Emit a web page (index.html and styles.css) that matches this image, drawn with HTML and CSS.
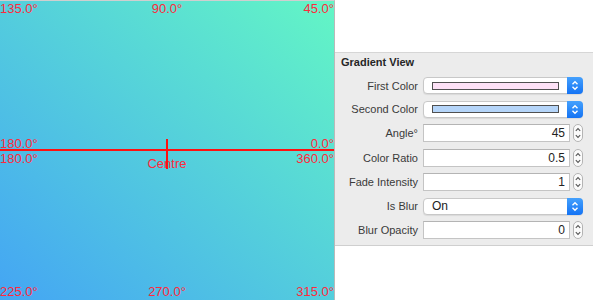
FILE: index.html
```html
<!DOCTYPE html>
<html lang="en">
<head>
    <meta charset="UTF-8">
    <meta name="viewport" content="width=device-width, initial-scale=1.0">
    <title>Gradient View</title>
    <link rel="stylesheet" href="styles.css">
</head>
<body>
    <div class="screen">
        <div class="canvas">
            <div class="label-row">
                <span class="lbl-left">135.0°</span>
                <span>90.0°</span>
                <span class="lbl-right">45.0°</span>
            </div>

            <div class="axis">
                <div class="label-row">
                    <span class="lbl-left">180.0°</span>
                    <span></span>
                    <span class="lbl-right">0.0°</span>
                </div>
                <div class="axis-line"></div>
                <div class="label-row">
                    <span class="lbl-left">180.0°</span>
                    <span class="centre">Centre</span>
                    <span class="lbl-right">360.0°</span>
                </div>
                <div class="tick"></div>
            </div>

            <div class="label-row bottom-row">
                <span class="lbl-left">225.0°</span>
                <span>270.0°</span>
                <span class="lbl-right">315.0°</span>
            </div>
        </div>

        <div class="side">
            <div class="panel">
                <div class="panel-title">Gradient View</div>

                <div class="rows">
                    <div class="field-row">
                        <label>First Color</label>
                        <div class="popup">
                            <span class="swatch pink"></span>
                            <span class="popup-btn">
                                <svg width="16" height="17" viewBox="0 0 16 17"><path d="M5.5 7.2 L8 4.7 L10.5 7.2 M5.5 9.8 L8 12.3 L10.5 9.8" fill="none" stroke="#fff" stroke-width="1.4"/></svg>
                            </span>
                        </div>
                    </div>

                    <div class="field-row">
                        <label>Second Color</label>
                        <div class="popup">
                            <span class="swatch blue"></span>
                            <span class="popup-btn">
                                <svg width="16" height="17" viewBox="0 0 16 17"><path d="M5.5 7.2 L8 4.7 L10.5 7.2 M5.5 9.8 L8 12.3 L10.5 9.8" fill="none" stroke="#fff" stroke-width="1.4"/></svg>
                            </span>
                        </div>
                    </div>

                    <div class="field-row">
                        <label>Angle°</label>
                        <div class="input-wrap">
                            <div class="input">45</div>
                            <span class="stepper">
                                <svg width="10" height="18" viewBox="0 0 10 18"><path d="M2.8 6.8 L5 4.6 L7.2 6.8 M2.8 11.2 L5 13.4 L7.2 11.2" fill="none" stroke="#555" stroke-width="1.1"/></svg>
                            </span>
                        </div>
                    </div>

                    <div class="field-row">
                        <label>Color Ratio</label>
                        <div class="input-wrap">
                            <div class="input">0.5</div>
                            <span class="stepper">
                                <svg width="10" height="18" viewBox="0 0 10 18"><path d="M2.8 6.8 L5 4.6 L7.2 6.8 M2.8 11.2 L5 13.4 L7.2 11.2" fill="none" stroke="#555" stroke-width="1.1"/></svg>
                            </span>
                        </div>
                    </div>

                    <div class="field-row">
                        <label>Fade Intensity</label>
                        <div class="input-wrap">
                            <div class="input">1</div>
                            <span class="stepper">
                                <svg width="10" height="18" viewBox="0 0 10 18"><path d="M2.8 6.8 L5 4.6 L7.2 6.8 M2.8 11.2 L5 13.4 L7.2 11.2" fill="none" stroke="#555" stroke-width="1.1"/></svg>
                            </span>
                        </div>
                    </div>

                    <div class="field-row">
                        <label>Is Blur</label>
                        <div class="popup">
                            <span class="popup-text">On</span>
                            <span class="popup-btn">
                                <svg width="16" height="17" viewBox="0 0 16 17"><path d="M5.5 7.2 L8 4.7 L10.5 7.2 M5.5 9.8 L8 12.3 L10.5 9.8" fill="none" stroke="#fff" stroke-width="1.4"/></svg>
                            </span>
                        </div>
                    </div>

                    <div class="field-row">
                        <label>Blur Opacity</label>
                        <div class="input-wrap">
                            <div class="input">0</div>
                            <span class="stepper">
                                <svg width="10" height="18" viewBox="0 0 10 18"><path d="M2.8 6.8 L5 4.6 L7.2 6.8 M2.8 11.2 L5 13.4 L7.2 11.2" fill="none" stroke="#555" stroke-width="1.1"/></svg>
                            </span>
                        </div>
                    </div>
                </div>
            </div>
        </div>
    </div>
</body>
</html>
```

FILE: styles.css
```css
body {
    margin: 0;
    font-family: "Liberation Sans", Arial, sans-serif;
    background: #fff;
}

.screen {
    display: flex;
    width: 593px;
    height: 300px;
    overflow: hidden;
}

/* gradient canvas */
.canvas {
    width: 334px;
    height: 299px;
    flex-shrink: 0;
    border-top: 1px solid #cfcfcf;
    border-right: 1px solid #b9b9b9;
    background: linear-gradient(to top right, #44a5f4, #63f6c5);
    color: #ff2a3c;
    font-size: 13px;
    display: flex;
    flex-direction: column;
}

.label-row {
    display: grid;
    grid-template-columns: 1fr auto 1fr;
    line-height: 15px;
    height: 15px;
}

.lbl-left {
    justify-self: start;
}

.lbl-right {
    justify-self: end;
}

.axis {
    position: relative;
    margin-top: 120px;
}

.axis-line {
    height: 2px;
    margin-top: -2px;
    background: #ff1010;
}

.centre {
    padding-top: 5px;
}

.tick {
    position: absolute;
    left: calc(50% - 1px);
    top: 3px;
    width: 2px;
    height: 30px;
    background: #ff1010;
}

.bottom-row {
    margin-top: auto;
    padding-bottom: 1px;
}

/* inspector side */
.side {
    flex: 1;
    padding-top: 52px;
}

.panel {
    background: #ececec;
    border-top: 1px solid #d6d6d6;
    border-bottom: 1px solid #cfcfcf;
    padding: 2px 10px 6px 0;
    font-size: 11px;
    color: #3a3a3a;
}

.panel-title {
    padding-left: 6px;
    font-weight: bold;
    line-height: 14px;
    color: #262626;
}

.rows {
    margin-top: 8px;
    display: flex;
    flex-direction: column;
    gap: 6.5px;
}

.field-row {
    display: grid;
    grid-template-columns: 83px 1fr;
    column-gap: 5px;
    align-items: center;
}

.field-row label {
    text-align: right;
    white-space: nowrap;
}

.popup {
    height: 17px;
    box-sizing: border-box;
    border: 1px solid #c8c8c8;
    border-radius: 4px;
    background: #fff;
    display: flex;
    align-items: center;
    box-shadow: 0 1px 1px rgba(0, 0, 0, 0.08);
}

.swatch {
    margin-left: 8px;
    width: 127px;
    height: 8px;
    box-sizing: border-box;
    border: 1px solid #505050;
}

.swatch.pink {
    background: #fde1f6;
}

.swatch.blue {
    background: #b5d5f9;
}

.popup-text {
    padding-left: 8px;
    font-size: 12px;
    color: #222;
}

.popup-btn {
    margin: -1px -1px -1px auto;
    width: 16px;
    height: 17px;
    border-radius: 0 4px 4px 0;
    background: linear-gradient(#45a1fd, #1473f4);
    display: flex;
    align-items: center;
    justify-content: center;
}

.input-wrap {
    display: flex;
    align-items: center;
    gap: 3px;
}

.input {
    flex: 1;
    height: 18px;
    box-sizing: border-box;
    border: 1px solid #c4c4c4;
    border-top-color: #b4b4b4;
    background: #fff;
    text-align: right;
    padding-right: 4px;
    font-size: 12px;
    line-height: 16px;
    color: #222;
}

.stepper {
    width: 10px;
    height: 18px;
    box-sizing: border-box;
    border: 1px solid #b4b4b4;
    border-radius: 5px;
    background: #fbfbfb;
    display: flex;
    align-items: center;
    justify-content: center;
}

.stepper svg {
    margin: 0 -1px;
}
```
